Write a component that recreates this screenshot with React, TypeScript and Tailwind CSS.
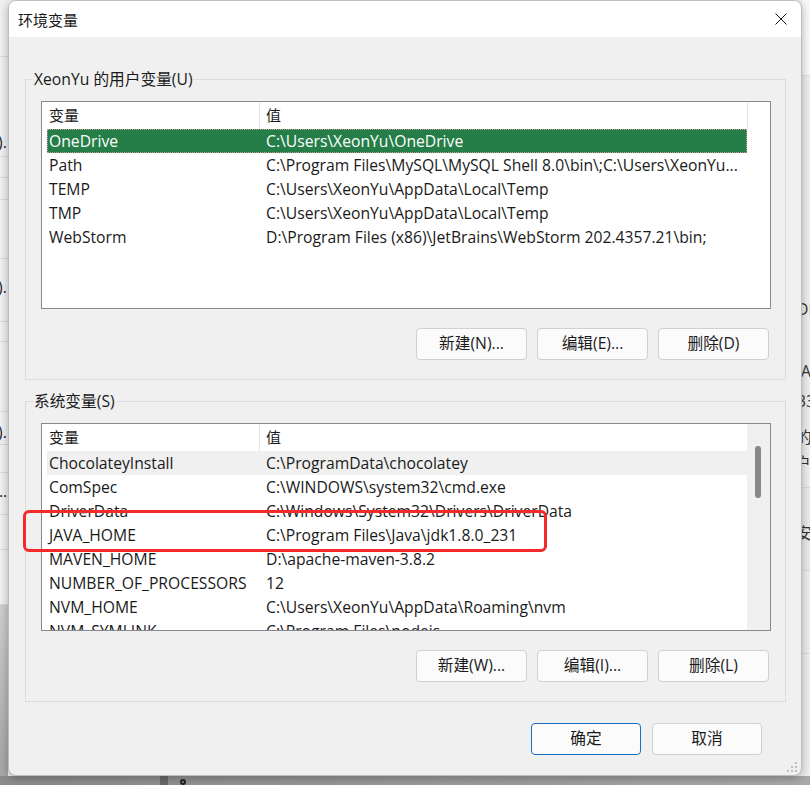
import React from "react";

type Row = { name: string; value: string };

const userRows: Row[] = [
  { name: "OneDrive", value: "C:\\Users\\XeonYu\\OneDrive" },
  { name: "Path", value: "C:\\Program Files\\MySQL\\MySQL Shell 8.0\\bin\\;C:\\Users\\XeonYu..." },
  { name: "TEMP", value: "C:\\Users\\XeonYu\\AppData\\Local\\Temp" },
  { name: "TMP", value: "C:\\Users\\XeonYu\\AppData\\Local\\Temp" },
  { name: "WebStorm", value: "D:\\Program Files (x86)\\JetBrains\\WebStorm 202.4357.21\\bin;" },
];

const sysRows: Row[] = [
  { name: "ChocolateyInstall", value: "C:\\ProgramData\\chocolatey" },
  { name: "ComSpec", value: "C:\\WINDOWS\\system32\\cmd.exe" },
  { name: "DriverData", value: "C:\\Windows\\System32\\Drivers\\DriverData" },
  { name: "JAVA_HOME", value: "C:\\Program Files\\Java\\jdk1.8.0_231" },
  { name: "MAVEN_HOME", value: "D:\\apache-maven-3.8.2" },
  { name: "NUMBER_OF_PROCESSORS", value: "12" },
  { name: "NVM_HOME", value: "C:\\Users\\XeonYu\\AppData\\Roaming\\nvm" },
  { name: "NVM_SYMLINK", value: "C:\\Program Files\\nodejs" },
];

function VarList({ rows, selected, hover, scrollbar }: { rows: Row[]; selected?: number; hover?: number; scrollbar?: boolean }) {
  return (
    <div className="h-[208px] border border-[#868a8e] bg-white flex overflow-hidden">
      <div className="w-[705px] flex flex-col shrink-0">
        <div className="h-[27px] flex shrink-0">
          <div className="w-[218px] border-r border-[#e5e5e5] pl-[7px] flex items-center text-[15px]">变量</div>
          <div className="w-[487px] pl-[6px] flex items-center text-[15px]">值</div>
        </div>
        <div className="pl-[5px] flex flex-col">
          {rows.map((r, i) => {
            const sel = i === selected;
            const hov = i === hover;
            return (
              <div
                key={r.name}
                className={
                  "h-[24px] w-[700px] flex items-center shrink-0 " +
                  (sel
                    ? "bg-[#257e48] text-white outline outline-1 outline-dotted outline-[#c99a9a] -outline-offset-1"
                    : hov
                    ? "bg-[#f0f0f0]"
                    : "")
                }
              >
                <div className="w-[217px] pl-[2px] whitespace-nowrap overflow-hidden leading-[24px]">{r.name}</div>
                <div className="flex-1 pl-[2px] whitespace-nowrap overflow-hidden leading-[24px]">{r.value}</div>
              </div>
            );
          })}
        </div>
      </div>
      {scrollbar ? (
        <div className="w-[23px] bg-[#f0f0f0] pl-[8px] pt-[22px] shrink-0">
          <div className="w-[6px] h-[52px] bg-[#878787] rounded-full" />
        </div>
      ) : (
        <div className="w-[23px] shrink-0">
          <div className="h-[27px] border-l border-[#e5e5e5]" />
        </div>
      )}
    </div>
  );
}

function Btn({ label, primary, w }: { label: string; primary?: boolean; w: string }) {
  return (
    <div
      className={
        "h-[32px] rounded-[4px] flex items-center justify-center bg-[#fbfbfb] border " +
        w +
        " " +
        (primary ? "border-[#1a6fc4]" : "border-[#d0d0d0]")
      }
    >
      {label}
    </div>
  );
}

function Group({ title, children }: { title: string; children: React.ReactNode }) {
  return (
    <fieldset className="w-[761px] border border-[#dcdcdc] pl-[15px] pr-[14px] pt-[12px] pb-[19px]">
      <legend className="ml-[-8px] px-[1px] leading-[20px]">{title}</legend>
      {children}
    </fieldset>
  );
}

function LeftStrip() {
  const line = "border-b border-[#dadada]";
  return (
    <div className="w-[8px] h-[776px] shrink-0 overflow-hidden bg-[#f1f1f1] flex flex-col text-[#222]">
      <div className={"h-[57px] " + line} />
      <div className={"h-[100px] flex items-end pb-[4px] " + line}>
        <span className="ml-[-2px] whitespace-nowrap leading-[20px]">).</span>
      </div>
      <div className={"h-[21px] " + line} />
      <div className={"h-[22px] " + line} />
      <div className={"h-[59px] " + line} />
      <div className={"h-[63px] pt-[18px] " + line}>
        <span className="ml-[-2px] whitespace-nowrap leading-[20px] block">).</span>
      </div>
      <div className={"h-[20px] " + line} />
      <div className={"h-[70px] " + line} />
      <div className={"h-[33px] flex items-end pb-[2px] " + line}>
        <span className="ml-[-2px] whitespace-nowrap leading-[20px]">).</span>
      </div>
      <div className={"h-[28px] " + line} />
      <div className={"h-[42px] pt-[8px] " + line}>
        <span className="ml-[-1px] whitespace-nowrap leading-[20px] block">...</span>
      </div>
      <div className={"h-[35px] " + line} />
      <div className={"h-[55px] " + line} />
      <div className="flex-1 bg-linear-to-b from-[#cfcfcf] to-[#a6a6a6]" />
    </div>
  );
}

function RightStrip() {
  return (
    <div className="w-[8px] h-[776px] shrink-0 overflow-hidden bg-[#efefef] flex flex-col text-[#333] leading-[22px]">
      <div className="h-[76px] bg-[#fafafa] border-b border-[#e2e2e2]" />
      <div className="h-[222px]" />
      <div className="h-[22px] whitespace-nowrap ml-[-5px]">DH</div>
      <div className="h-[40px]" />
      <div className="h-[22px] whitespace-nowrap ml-[-1px]">A</div>
      <div className="h-[8px]" />
      <div className="h-[22px] whitespace-nowrap ml-[-5px]">33</div>
      <div className="h-[14px]" />
      <div className="h-[22px] whitespace-nowrap ml-[-6px]">的</div>
      <div className="h-[4px]" />
      <div className="h-[22px] whitespace-nowrap ml-[-7px]">户</div>
      <div className="h-[14px] border-b border-[#dcdcdc]" />
      <div className="h-[34px] bg-[#ebebeb]" />
      <div className="h-[22px] whitespace-nowrap ml-[-6px] bg-[#ebebeb]">安</div>
      <div className="h-[27px] border-b border-[#dcdcdc] bg-[#ebebeb]" />
      <div className="h-[83px] border-b border-[#dcdcdc]" />
      <div className="flex-1" />
    </div>
  );
}

function Dialog() {
  return (
    <div className="relative w-[794px] h-[776px] shrink-0 flex flex-col bg-[#f0f0f0] border border-[#bdbdbd] rounded-[8px] overflow-hidden shadow-[0_2px_10px_rgba(0,0,0,0.3)]">
      <div className="h-[36px] shrink-0 bg-white flex items-center justify-between pl-[9px] pr-[14px]">
        <span className="leading-[20px] pt-[1px] text-[15px]">环境变量</span>
        <svg width="12" height="12" viewBox="0 0 12 12">
          <path d="M0.5 0.5L11.5 11.5M11.5 0.5L0.5 11.5" stroke="#1a1a1a" strokeWidth="1" fill="none" />
        </svg>
      </div>
      <div className="flex flex-col pl-[16px] pr-[15px]">
        <div className="mt-[32px]">
          <Group title="XeonYu 的用户变量(U)">
            <VarList rows={userRows} selected={0} />
            <div className="mt-[19px] flex justify-end gap-[10px] pr-[2px]">
              <Btn label="新建(N)..." w="w-[111px]" />
              <Btn label="编辑(E)..." w="w-[111px]" />
              <Btn label="删除(D)" w="w-[111px]" />
            </div>
          </Group>
        </div>
        <div className="mt-[11px]">
          <Group title="系统变量(S)">
            <VarList rows={sysRows} hover={0} scrollbar />
            <div className="mt-[19px] flex justify-end gap-[10px] pr-[2px]">
              <Btn label="新建(W)..." w="w-[111px]" />
              <Btn label="编辑(I)..." w="w-[111px]" />
              <Btn label="删除(L)" w="w-[111px]" />
            </div>
          </Group>
        </div>
        <div className="mt-[21px] flex justify-end gap-[11px] pr-[24px]">
          <Btn label="确定" primary w="w-[110px]" />
          <Btn label="取消" w="w-[110px]" />
        </div>
      </div>
      <svg className="absolute right-[3px] bottom-[2px]" width="12" height="12" viewBox="0 0 12 12">
        <rect x="9" y="1" width="2" height="2" fill="#bdbdbd" />
        <rect x="5" y="5" width="2" height="2" fill="#bdbdbd" />
        <rect x="9" y="5" width="2" height="2" fill="#bdbdbd" />
        <rect x="1" y="9" width="2" height="2" fill="#bdbdbd" />
        <rect x="5" y="9" width="2" height="2" fill="#bdbdbd" />
        <rect x="9" y="9" width="2" height="2" fill="#bdbdbd" />
      </svg>
    </div>
  );
}

export default function App() {
  return (
    <div className="relative w-[810px] h-[785px] overflow-hidden bg-[#f2f2f2] font-['Open_Sans','Noto_Sans_CJK_SC',sans-serif] text-[15.7px] text-[#1a1a1a] flex flex-col">
      <div className="flex h-[776px] shrink-0">
        <LeftStrip />
        <Dialog />
        <RightStrip />
      </div>
      <div className="h-[9px] flex bg-linear-to-r from-[#8c8c8c] to-[#a9a9a9]">
        <div className="w-[160px]" />
        <div className="w-[8px] bg-[#6a6a6a]" />
        <div className="ml-[10px] w-[10px] h-[9px] flex items-start justify-center">
          <div className="w-[6px] h-[6px] mt-[3px] rounded-full border-2 border-[#222]" />
        </div>
      </div>
      <div className="absolute left-[23px] top-[510px] w-[524px] h-[42px] border-[3px] border-[#f42a2a] rounded-[6px]" />
    </div>
  );
}
